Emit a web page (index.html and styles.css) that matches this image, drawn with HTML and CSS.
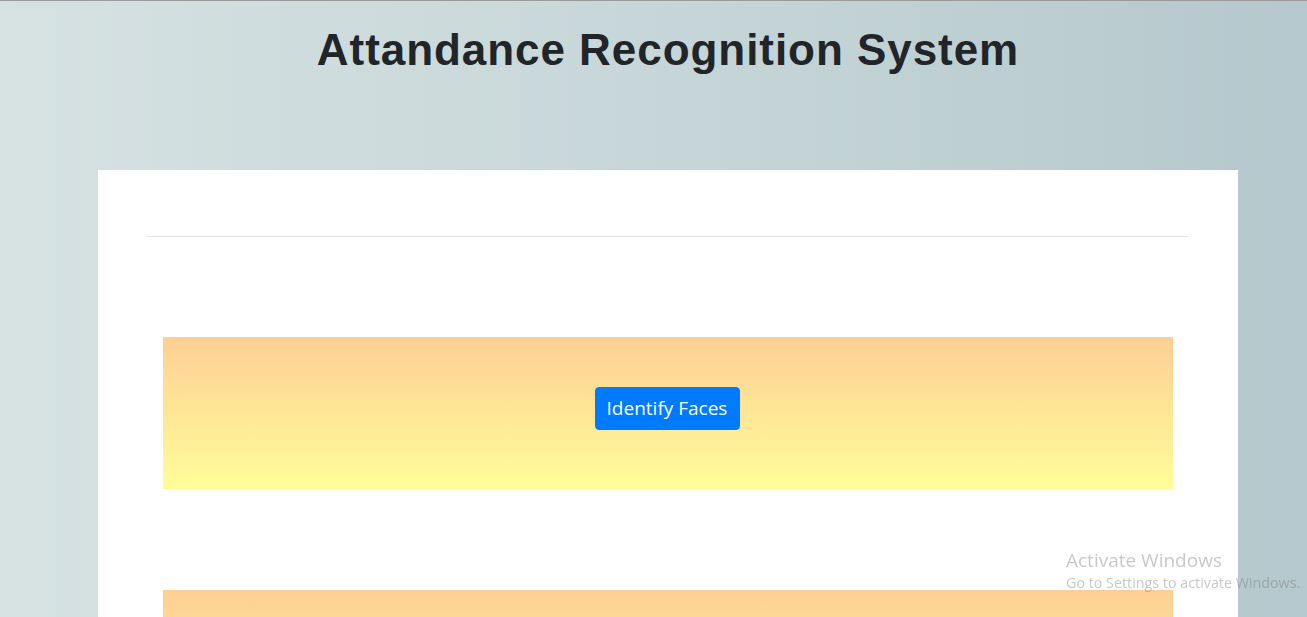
FILE: index.html
```html
<!DOCTYPE html>
<html lang="en">
<head>
<meta charset="utf-8">
<title>Attandance Recognition System</title>
<link rel="stylesheet" href="styles.css">
</head>
<body>
<div class="page">
  <div class="container">
    <h1 class="title">Attandance Recognition System</h1>
    <main class="card">
      <hr class="divider">
      <section class="panel">
        <button class="btn-primary" type="button">Identify Faces</button>
      </section>
      <section class="panel panel-next"></section>
    </main>
  </div>
</div>
<div class="watermark">
  <div class="wm-title">Activate Windows</div>
  <div class="wm-sub">Go to Settings to activate Windows.</div>
</div>
</body>
</html>
```
FILE: styles.css
```css
html, body {
  margin: 0;
  padding: 0;
  overflow: hidden;
  height: 100%;
}
body {
  font-family: "Open Sans", "Noto Sans", sans-serif;
}
.page {
  min-height: 100%;
  border-top: 1px solid #9a9a9a;
  background: linear-gradient(to right, #d6e2e2 0%, #c7d6d8 50%, #b5c8cd 100%);
  box-sizing: border-box;
}
.container {
  width: 1140px;
  margin-left: 98px;
  padding-top: 24px;
}
.title {
  margin: 0;
  text-align: center;
  font-family: "Liberation Sans", Arial, sans-serif;
  font-weight: 700;
  font-size: 44px;
  line-height: 49px;
  letter-spacing: 0.95px;
  color: #212529;
}
.card {
  margin-top: 96px;
  background: #fff;
  padding: 66px 50px 200px 49px;
  display: flex;
  flex-direction: column;
}
.divider {
  margin: 0;
  border: 0;
  border-top: 1px solid #e2e2e2;
}
.panel {
  margin: 100px 15px 0 16px;
  height: 152px;
  background: linear-gradient(to bottom, #fecf94, #fffd99);
  display: flex;
  justify-content: center;
  align-items: flex-start;
  padding-top: 50px;
  box-sizing: border-box;
}
.panel-next {
  margin-top: 101px;
}
.btn-primary {
  width: 145px;
  height: 43px;
  margin-left: -2px;
  background: #007bff;
  color: #fff;
  border: 1px solid #007bff;
  border-radius: 4px;
  font-family: "Open Sans", "Noto Sans", sans-serif;
  font-size: 19px;
  line-height: 1;
  padding: 0;
  cursor: pointer;
}
.watermark {
  position: fixed;
  left: 1066px;
  top: 547px;
  color: rgba(110, 110, 110, 0.38);
  font-family: "Open Sans", "Noto Sans", sans-serif;
  pointer-events: none;
}
.wm-title {
  font-size: 19px;
  line-height: 27px;
}
.wm-sub {
  font-size: 14.3px;
  line-height: 18px;
  white-space: nowrap;
}
```
